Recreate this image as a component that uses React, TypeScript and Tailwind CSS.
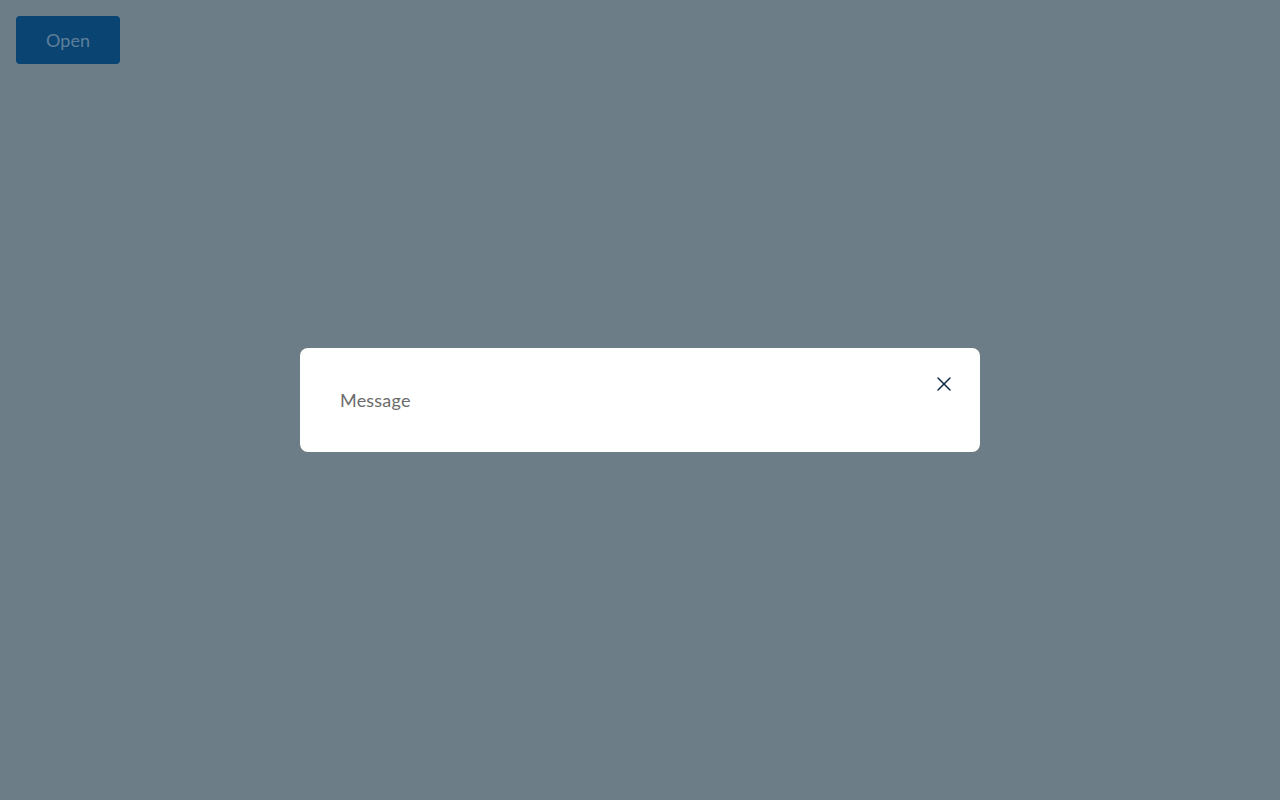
import { X } from "lucide-react";

export default function App() {
  return (
    <div className="h-screen w-full bg-[#6d7d87] font-['Lato',sans-serif]">
      <div className="p-4">
        <button className="w-[104px] h-12 rounded bg-[#0a4473] text-[18px] text-[#5e7f99]">
          Open
        </button>
      </div>
      <div className="fixed inset-0 flex items-center justify-center">
        <div className="relative w-[680px] rounded-lg bg-white p-10">
          <p className="text-[18px] leading-6 tracking-[0.2px] text-[#6b6b6b]">Message</p>
          <button className="absolute top-6 right-6 text-[#0d2b45]">
            <X size={24} strokeWidth={1.5} />
          </button>
        </div>
      </div>
    </div>
  );
}
